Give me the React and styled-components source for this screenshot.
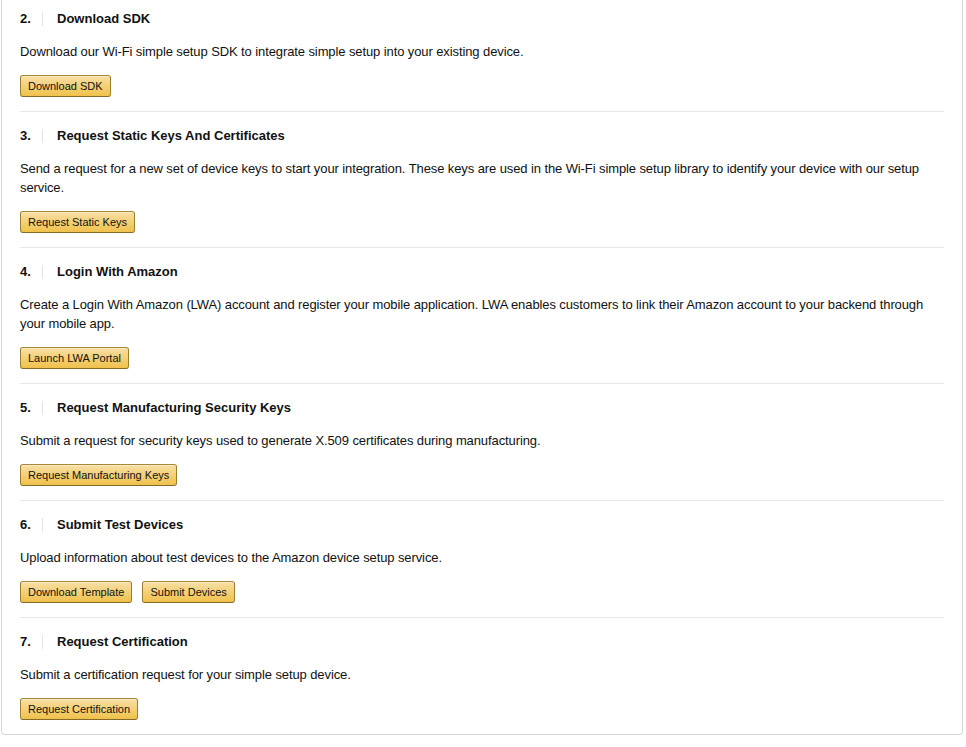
import React from 'react';
import styled, { createGlobalStyle } from 'styled-components';

const GlobalStyle = createGlobalStyle`
  body {
    margin: 0;
    background: #fff;
    font-family: "Liberation Sans", Arial, sans-serif;
    color: #111;
  }
`;

const Card = styled.div`
  box-sizing: border-box;
  width: 962px;
  margin-left: 1px;
  padding: 0 18px;
  border: 1px solid #d5d9d9;
  border-top: 0;
  border-radius: 0 0 4px 4px;
  background: #fff;
`;

const Section = styled.section`
  padding: 16px 0 14px;
  border-top: 1px solid #e7e7e7;

  &:first-child {
    padding-top: 11px;
    border-top: 0;
  }
`;

const Heading = styled.h3`
  display: flex;
  align-items: center;
  margin: 0;
  font-size: 13px;
  line-height: 16px;
  font-weight: 700;
  color: #111;
`;

const Num = styled.span`
  width: 22px;
`;

const Divider = styled.span`
  width: 1px;
  height: 14px;
  background: #e3e3e3;
  margin-right: 14px;
`;

const Text = styled.p`
  margin: 15px 0 14px;
  font-size: 13px;
  line-height: 19px;
  letter-spacing: -0.1px;
  color: #111;
`;

const Actions = styled.div`
  display: flex;
  gap: 10px;
`;

const Button = styled.button`
  box-sizing: border-box;
  height: 22px;
  padding: 0 7px;
  font-family: inherit;
  font-size: 11px;
  color: #111;
  border: 1px solid;
  border-color: #a88734 #9c7e31 #846a29;
  border-radius: 3px;
  background: linear-gradient(to bottom, #f7dfa5, #f0c14b);
  box-shadow: inset 0 1px 0 rgba(255, 255, 255, 0.4);
  cursor: pointer;
`;

const steps = [
  {
    n: '2.',
    title: 'Download SDK',
    text: 'Download our Wi-Fi simple setup SDK to integrate simple setup into your existing device.',
    actions: ['Download SDK'],
  },
  {
    n: '3.',
    title: 'Request Static Keys And Certificates',
    text: 'Send a request for a new set of device keys to start your integration. These keys are used in the Wi-Fi simple setup library to identify your device with our setup service.',
    actions: ['Request Static Keys'],
  },
  {
    n: '4.',
    title: 'Login With Amazon',
    text: 'Create a Login With Amazon (LWA) account and register your mobile application. LWA enables customers to link their Amazon account to your backend through your mobile app.',
    actions: ['Launch LWA Portal'],
  },
  {
    n: '5.',
    title: 'Request Manufacturing Security Keys',
    text: 'Submit a request for security keys used to generate X.509 certificates during manufacturing.',
    actions: ['Request Manufacturing Keys'],
  },
  {
    n: '6.',
    title: 'Submit Test Devices',
    text: 'Upload information about test devices to the Amazon device setup service.',
    actions: ['Download Template', 'Submit Devices'],
  },
  {
    n: '7.',
    title: 'Request Certification',
    text: 'Submit a certification request for your simple setup device.',
    actions: ['Request Certification'],
  },
];

const App = () => (
  <>
    <GlobalStyle />
    <Card>
      {steps.map((s) => (
        <Section key={s.n}>
          <Heading>
            <Num>{s.n}</Num>
            <Divider />
            {s.title}
          </Heading>
          <Text>{s.text}</Text>
          <Actions>
            {s.actions.map((a) => (
              <Button key={a}>{a}</Button>
            ))}
          </Actions>
        </Section>
      ))}
    </Card>
  </>
);

export default App;
